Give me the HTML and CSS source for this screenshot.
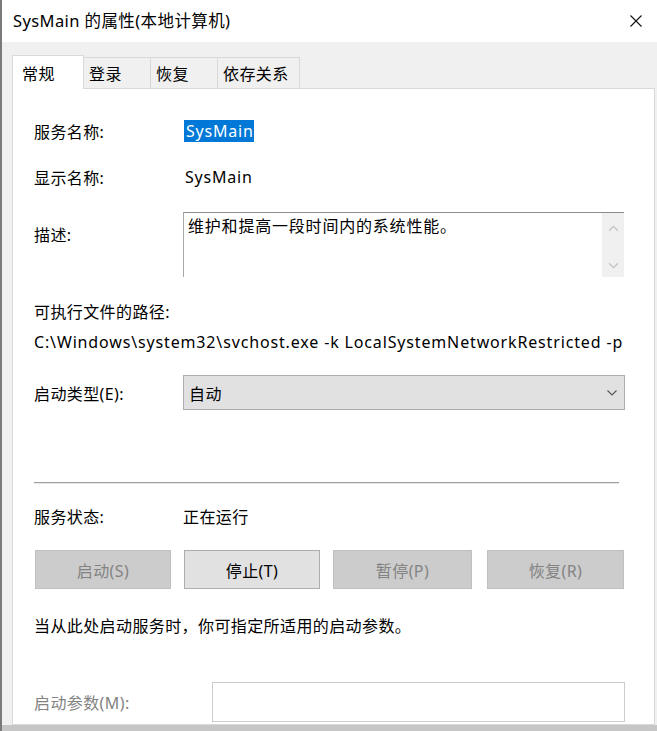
FILE: index.html
```html
<!DOCTYPE html>
<html lang="zh-CN">
<head>
    <meta charset="UTF-8">
    <title>SysMain 的属性(本地计算机)</title>
    <link rel="stylesheet" href="styles.css">
</head>
<body>
<div class="window">
    <div class="titlebar">
        <span class="title">SysMain 的属性(本地计算机)</span>
        <svg class="close" viewBox="0 0 12 12">
            <path d="M0.5 0.5L11.5 11.5M11.5 0.5L0.5 11.5" stroke="#111" stroke-width="1.1"/>
        </svg>
    </div>
    <div class="body">
        <div class="tabs">
            <div class="tab active">常规</div>
            <div class="tab">登录</div>
            <div class="tab">恢复</div>
            <div class="tab">依存关系</div>
        </div>
        <div class="panel">
            <div class="row first">
                <span class="label">服务名称:</span>
                <span class="selected latin">SysMain</span>
            </div>
            <div class="row">
                <span class="label">显示名称:</span>
                <span class="value latin">SysMain</span>
            </div>
            <div class="row top">
                <span class="label desc-label">描述:</span>
                <div class="textbox">
                    <span class="desc-text">维护和提高一段时间内的系统性能。</span>
                    <div class="scrollbar">
                        <svg viewBox="0 0 10 6"><path d="M1 5L5 1L9 5" stroke="#c2c2c2" stroke-width="1.1" fill="none"/></svg>
                        <svg viewBox="0 0 10 6"><path d="M1 1L5 5L9 1" stroke="#c2c2c2" stroke-width="1.1" fill="none"/></svg>
                    </div>
                </div>
            </div>
            <div class="line path-label">可执行文件的路径:</div>
            <div class="line path">C:\Windows\system32\svchost.exe -k LocalSystemNetworkRestricted -p</div>
            <div class="row startup">
                <span class="label">启动类型(E):</span>
                <div class="select">
                    <span>自动</span>
                    <svg viewBox="0 0 10 6"><path d="M0.5 0.5L5 5L9.5 0.5" stroke="#555" stroke-width="1.1" fill="none"/></svg>
                </div>
            </div>
            <div class="separator"></div>
            <div class="row status">
                <span class="label">服务状态:</span>
                <span class="value">正在运行</span>
            </div>
            <div class="buttons">
                <button class="btn disabled">启动(S)</button>
                <button class="btn">停止(T)</button>
                <button class="btn disabled">暂停(P)</button>
                <button class="btn disabled">恢复(R)</button>
            </div>
            <div class="line note">当从此处启动服务时，你可指定所适用的启动参数。</div>
            <div class="row params">
                <span class="label muted">启动参数(M):</span>
                <div class="input"></div>
            </div>
        </div>
    </div>
    <div class="bottom-bar"></div>
</div>
</body>
</html>
```

FILE: styles.css
```css
:root {
    --border: #d9d9d9;
    --face: #f0f0f0;
    --btn: #e1e1e1;
    --btn-border: #adadad;
    --disabled: #cccccc;
    --disabled-border: #bfbfbf;
    --disabled-text: #838383;
}
body {
    margin: 0;
    font-family: "Noto Sans", "Noto Sans CJK SC", sans-serif;
    font-size: 16px;
    letter-spacing: 0.4px;
    color: #000;
    background: var(--face);
}
.window {
    width: 657px;
    height: 731px;
    overflow: hidden;
    display: flex;
    flex-direction: column;
    border-left: 2px solid #7a7a7a;
    box-sizing: border-box;
}
.titlebar {
    height: 42px;
    flex: none;
    background: #fff;
    display: flex;
    align-items: center;
    justify-content: space-between;
    padding: 0 15px 0 11px;
}
.title {
    font-size: 16.5px;
    letter-spacing: 0.4px;
    margin-top: -2px;
}
.close {
    width: 12px;
    height: 12px;
}
.body {
    flex: 1;
    display: flex;
    flex-direction: column;
    padding: 13px 2px 0 10px;
    min-height: 0;
}
.tabs {
    display: flex;
    align-items: flex-end;
    height: 33px;
    position: relative;
    z-index: 1;
}
.tab {
    height: 31px;
    box-sizing: border-box;
    padding: 0 0 0 5px;
    border: 1px solid var(--border);
    border-bottom: none;
    background: var(--face);
    display: flex;
    align-items: center;
    margin-left: -1px;
}
.tab:nth-child(2) { width: 67px; }
.tab:nth-child(3) { width: 68px; }
.tab:nth-child(4) { width: 83px; }
.tab.active {
    width: 72px;
    height: 34px;
    margin-left: 0;
    background: #fff;
    padding-left: 9px;
    margin-bottom: -1px;
}
.tab.active + .tab { border-left: none; margin-left: 0; }
.panel {
    flex: 1;
    background: #fff;
    border: 1px solid var(--border);
    padding: 0 29px 0 21px;
}
.row {
    display: flex;
    align-items: center;
    height: 22px;
    margin-top: 24px;
}
.row.first { margin-top: 31px; }
.row.top {
    align-items: flex-start;
    height: 65px;
}
.label {
    width: 149px;
    flex: none;
}
.latin { letter-spacing: 0.8px; }
.desc-label { padding-top: 10px; }
.selected {
    background: #0078d7;
    color: #fff;
    padding: 0 0 0 2px;
    line-height: 22px;
    margin-left: 1px;
}
.value { margin-left: 2px; }
.textbox {
    flex: 1;
    height: 65px;
    box-sizing: border-box;
    border-top: 1px solid #8c8c8c;
    border-left: 1px solid #a8a8a8;
    display: flex;
    justify-content: space-between;
    margin-right: 1px;
}
.desc-text {
    padding: 2px 0 0 4px;
    line-height: 22px;
    letter-spacing: 0.8px;
}
.scrollbar {
    width: 22px;
    background: var(--face);
    display: flex;
    flex-direction: column;
    justify-content: space-between;
    align-items: center;
    padding: 12px 0 8px;
}
.scrollbar svg {
    width: 11px;
    height: 7px;
}
.line {
    line-height: 22px;
}
.path-label { margin-top: 24px; }
.path {
    margin-top: 8px;
    white-space: nowrap;
    letter-spacing: 0.85px;
}
.row.startup {
    height: 35px;
    margin-top: 22px;
}
.select {
    flex: 1;
    height: 35px;
    box-sizing: border-box;
    background: var(--btn);
    border: 1px solid var(--btn-border);
    display: flex;
    align-items: center;
    justify-content: space-between;
    padding: 0 7px 0 5px;
}
.select svg {
    width: 10px;
    height: 6px;
}
.separator {
    margin: 72px 6px 0 0;
    height: 1px;
    background: #a0a0a0;
    border-bottom: 1px solid #e6e6e6;
}
.row.status { margin-top: 21px; }
.status .value { margin-left: 0; }
.buttons {
    display: flex;
    margin: 23px 0 0 1px;
}
.btn {
    width: 136px;
    height: 39px;
    font: inherit;
    letter-spacing: inherit;
    background: var(--btn);
    border: 1px solid var(--btn-border);
    color: #000;
    padding: 0;
    margin-left: 13px;
}
.btn:first-child { margin-left: 0; }
.btn:nth-child(3) { width: 139px; }
.btn:nth-child(4) { width: 137px; margin-left: 15px; }
.btn.disabled {
    background: var(--disabled);
    border-color: var(--disabled-border);
    color: var(--disabled-text);
}
.note { margin-top: 26px; }
.row.params {
    height: 40px;
    margin-top: 45px;
}
.params .label { width: 178px; }
.muted { color: var(--disabled-text); }
.input {
    flex: 1;
    height: 40px;
    box-sizing: border-box;
    border: 1px solid #cccccc;
}
.bottom-bar {
    height: 6px;
    flex: none;
    background: #c6c6c6;
}
```
